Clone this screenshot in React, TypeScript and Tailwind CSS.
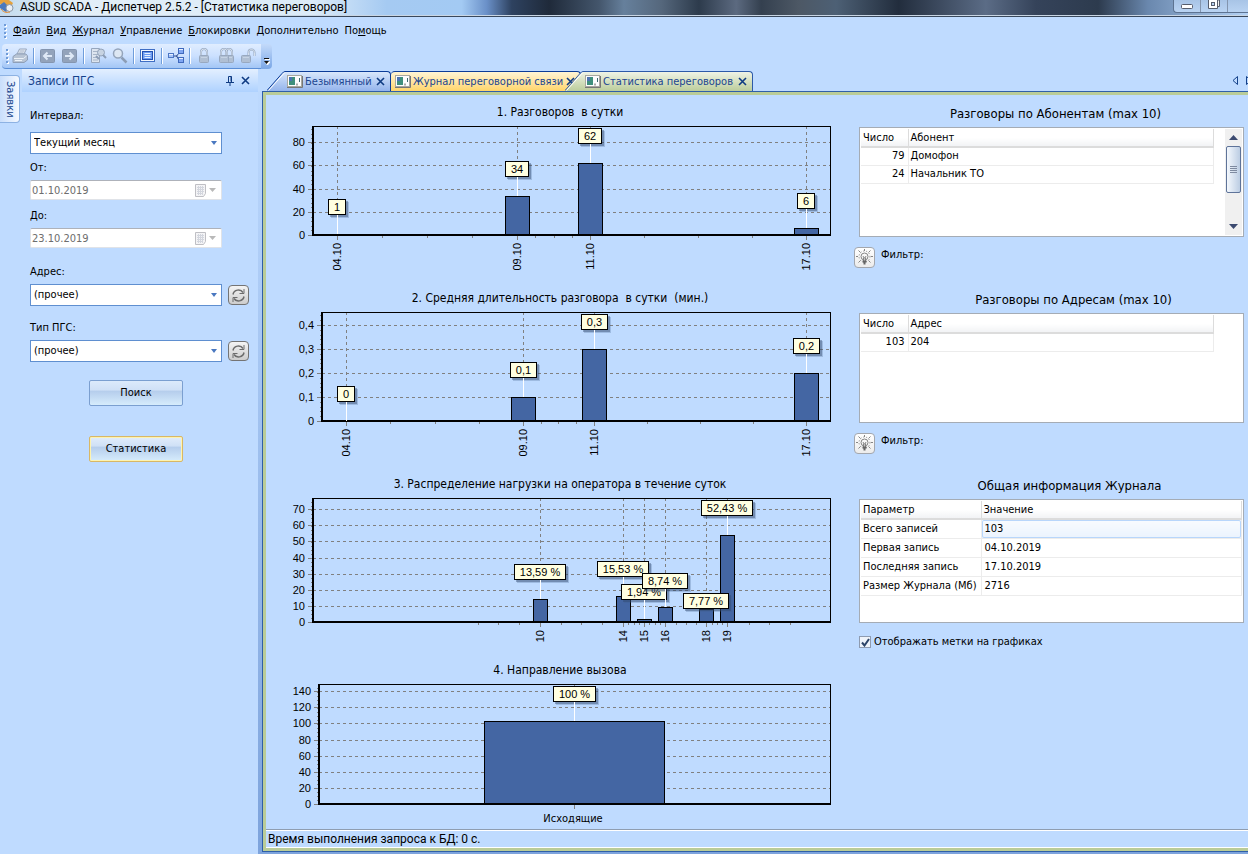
import { useState, type ReactNode } from 'react';
import clsx from 'clsx';

interface Bar {
  x: number;
  width: number;
  top: number;
  tick: string;
}

interface Mark {
  x: number;
  left: number;
  width: number;
  y: number;
  to: number;
  text: string;
}

interface ChartData {
  title: string;
  titleX: number;
  height: number;
  left: number;
  bottom: number;
  yTicks: [number, string][];
  yMinor: number;
  xMinor: number[];
  bars: Bar[];
  marks: Mark[];
  flatLabels?: boolean;
}

// Chart geometry is given in units of the 584 wide view box
const PLOT_TOP = 31;
const PLOT_RIGHT = 564;

const CHARTS: ChartData[] = [
  {
    title: '1. Разговоров \u00a0в сутки',
    titleX: 294,
    height: 186,
    left: 47,
    bottom: 140,
    yTicks: [[140, '0'], [117, '20'], [94, '40'], [70, '60'], [47, '80']],
    yMinor: 5,
    xMinor: [116, 161, 206, 269, 288, 306, 378, 432, 486],
    bars: [
      { x: 71, width: 0, top: 140, tick: '04.10' },
      { x: 251, width: 24, top: 101, tick: '09.10' },
      { x: 324, width: 24, top: 68, tick: '11.10' },
      { x: 540, width: 24, top: 133, tick: '17.10' },
    ],
    marks: [
      { x: 71, left: 62, width: 17, y: 104, to: 139, text: '1' },
      { x: 251, left: 239, width: 23, y: 66, to: 101, text: '34' },
      { x: 324, left: 312, width: 23, y: 33, to: 68, text: '62' },
      { x: 540, left: 531, width: 17, y: 98, to: 133, text: '6' },
    ],
  },
  {
    title: '2. Средняя длительность разговора \u00a0в сутки \u00a0(мин.)',
    titleX: 294,
    height: 186,
    left: 56,
    bottom: 140,
    yTicks: [[140, '0'], [116, '0,1'], [92, '0,2'], [68, '0,3'], [44, '0,4']],
    yMinor: 5,
    xMinor: [124, 169, 213, 275, 292, 310, 381, 434, 487],
    bars: [
      { x: 80, width: 0, top: 140, tick: '04.10' },
      { x: 257, width: 24, top: 116, tick: '09.10' },
      { x: 328, width: 24, top: 68, tick: '11.10' },
      { x: 540, width: 24, top: 92, tick: '17.10' },
    ],
    marks: [
      { x: 80, left: 71, width: 17, y: 105, to: 140, text: '0' },
      { x: 257, left: 244, width: 26, y: 81, to: 116, text: '0,1' },
      { x: 328, left: 315, width: 26, y: 33, to: 68, text: '0,3' },
      { x: 540, left: 527, width: 26, y: 57, to: 92, text: '0,2' },
    ],
  },
  {
    title: '3. Распределение нагрузки на оператора в течение суток',
    titleX: 294,
    height: 186,
    left: 47,
    bottom: 155,
    yTicks: [[155, '0'], [139, '10'], [123, '20'], [107, '30'], [91, '40'], [74, '50'], [58, '60'], [42, '70']],
    yMinor: 4,
    xMinor: [212, 232, 253, 295, 315, 336, 362, 368, 373, 383, 389, 394, 410, 420, 430, 446, 451, 456, 483, 503, 524],
    bars: [
      { x: 274, width: 14, top: 132, tick: '10' },
      { x: 357, width: 14, top: 129, tick: '14' },
      { x: 378, width: 14, top: 152, tick: '15' },
      { x: 399, width: 14, top: 140, tick: '16' },
      { x: 440, width: 14, top: 142, tick: '18' },
      { x: 461, width: 14, top: 68, tick: '19' },
    ],
    marks: [
      { x: 274, left: 248, width: 51, y: 97, to: 132, text: '13,59 %' },
      { x: 357, left: 331, width: 51, y: 94, to: 129, text: '15,53 %' },
      { x: 378, left: 355, width: 45, y: 117, to: 152, text: '1,94 %' },
      { x: 399, left: 376, width: 45, y: 106, to: 140, text: '8,74 %' },
      { x: 440, left: 417, width: 45, y: 126, to: 142, text: '7,77 %' },
      { x: 461, left: 435, width: 51, y: 33, to: 68, text: '52,43 %' },
    ],
  },
  {
    title: '4. Направление вызова',
    titleX: 294,
    height: 176,
    left: 53,
    bottom: 151,
    yTicks: [[151, '0'], [135, '20'], [119, '40'], [103, '60'], [87, '80'], [70, '100'], [54, '120'], [38, '140']],
    yMinor: 4,
    xMinor: [],
    bars: [{ x: 308, width: 180, top: 68, tick: 'Исходящие' }],
    marks: [{ x: 308, left: 287, width: 42, y: 33, to: 68, text: '100 %' }],
    flatLabels: true,
  },
];

function Chart({ data, showMarks }: { data: ChartData; showMarks: boolean }) {
  const { left, bottom, yTicks } = data;
  const step = (yTicks[0][0] - yTicks[1][0]) / data.yMinor;
  const minorY: number[] = [];
  for (let y = bottom - step; y > PLOT_TOP; y -= step) minorY.push(Math.round(y));

  return (
    <svg
      viewBox={`0 0 584 ${data.height}`}
      className="block h-auto w-full font-['Liberation_Sans',sans-serif] text-[11px]"
      shapeRendering="crispEdges"
      role="img"
      aria-label={data.title}
    >
      <text x={data.titleX} y="21" textAnchor="middle" className="font-['DejaVu_Sans_Condensed','DejaVu_Sans',sans-serif] text-[12px]">
        {data.title}
      </text>

      {/* Grid */}
      <g stroke="#808080" strokeDasharray="3 3">
        {yTicks.slice(1).map(([y]) => (
          <line key={y} x1={left} x2={PLOT_RIGHT} y1={y + 0.5} y2={y + 0.5} />
        ))}
        {data.bars.map((bar) => (
          <line key={bar.tick} x1={bar.x + 0.5} x2={bar.x + 0.5} y1={PLOT_TOP} y2={bottom} />
        ))}
      </g>

      {/* Ticks */}
      <g stroke="#808080">
        {yTicks.map(([y]) => (
          <line key={y} x1={left - 5} x2={left} y1={y + 0.5} y2={y + 0.5} />
        ))}
        {minorY.map((y) => (
          <line key={y} x1={left - 2} x2={left} y1={y + 0.5} y2={y + 0.5} />
        ))}
        {data.xMinor.map((x) => (
          <line key={x} x1={x + 0.5} x2={x + 0.5} y1={bottom} y2={bottom + 3} />
        ))}
        {data.bars.map((bar) => (
          <line key={bar.tick} x1={bar.x + 0.5} x2={bar.x + 0.5} y1={bottom} y2={bottom + 5} />
        ))}
      </g>

      {data.bars.map((bar) =>
        bar.width > 0 ? (
          <rect
            key={bar.tick}
            x={bar.x - bar.width / 2 + 0.5}
            y={bar.top + 0.5}
            width={bar.width}
            height={bottom - bar.top}
            fill="#4466a3"
            stroke="#000"
          />
        ) : null
      )}

      {/* Frame */}
      <path d={`M${left} ${PLOT_TOP + 0.5}H${PLOT_RIGHT + 0.5}V${bottom}`} fill="none" stroke="#000" />
      <path d={`M${left} ${PLOT_TOP}V${bottom}H${PLOT_RIGHT + 1}`} fill="none" stroke="#000" strokeWidth="2" />

      {yTicks.map(([y, text]) => (
        <text key={text} x={left - 8} y={y + 4} textAnchor="end">
          {text}
        </text>
      ))}
      {data.bars.map((bar) =>
        data.flatLabels ? (
          <text key={bar.tick} x={bar.x - 1} y={bottom + 18} textAnchor="middle" className="font-['DejaVu_Sans_Condensed','DejaVu_Sans',sans-serif]">
            {bar.tick}
          </text>
        ) : (
          <text key={bar.tick} transform={`translate(${bar.x + 4} ${bottom + 8}) rotate(-90)`} textAnchor="end">
            {bar.tick}
          </text>
        )
      )}

      {showMarks &&
        data.marks.map((mark) => (
          <g key={mark.text}>
            <rect x={mark.left + 3} y={mark.y + 3} width={mark.width + 1} height="16" fill="#3d5a88" opacity="0.25" />
            <rect x={mark.left + 2} y={mark.y + 2} width={mark.width + 1} height="16" fill="#2f456a" opacity="0.4" />
            <line x1={mark.x + 0.5} x2={mark.x + 0.5} y1={mark.y + 15} y2={mark.to} stroke="#fff" />
            <rect x={mark.left + 0.5} y={mark.y + 0.5} width={mark.width} height="15" fill="#ffffe1" stroke="#000" />
            <text x={mark.left + mark.width / 2 + 0.5} y={mark.y + 12} textAnchor="middle">
              {mark.text}
            </text>
          </g>
        ))}
    </svg>
  );
}

const MENU = [
  ['', 'Ф', 'айл'],
  ['', 'В', 'ид'],
  ['', 'Ж', 'урнал'],
  ['', 'У', 'правление'],
  ['', 'Б', 'локировки'],
  ['', 'Д', 'ополнительно'],
  ['По', 'м', 'ощь'],
];

function Grip() {
  return (
    <svg width="3" height="16" aria-hidden="true" className="shrink-0">
      {[1, 5, 9, 13].map((y) => (
        <g key={y}>
          <rect x="1" y={y + 1} width="2" height="2" fill="#fff" />
          <rect x="0" y={y} width="2" height="2" fill="#6f9bd8" />
        </g>
      ))}
    </svg>
  );
}

function ToolButton({ label, disabled, children }: { label: string; disabled?: boolean; children: ReactNode }) {
  return (
    <button type="button" disabled={disabled} aria-label={label} className="flex h-[22px] w-[22px] items-center justify-center">
      <svg width="18" height="18" viewBox="0 0 18 18" aria-hidden="true">
        {children}
      </svg>
    </button>
  );
}

function Separator() {
  return (
    <span className="flex h-4 w-[6px] justify-center">
      <span className="w-px bg-[#6f9ddb]" />
      <span className="w-px bg-white" />
    </span>
  );
}

function Padlock({ x = 0 }: { x?: number }) {
  return (
    <g>
      <path d={`M${x + 6} 9V5a3 3 0 0 1 6 0V9`} fill="none" stroke="#97a8c0" strokeWidth="2" />
      <path d={`M${x + 6} 9V5a3 3 0 0 1 6 0V9`} fill="none" stroke="#d5dfec" strokeWidth="1" />
      <rect x={x + 4.5} y="8.500" width="9" height="7" rx="1" fill="#b0bfd3" stroke="#98a8bf" />
      <path d={`M${x + 6} 10.500h6`} stroke="#c6d3e4" />
    </g>
  );
}

function Toolbar() {
  return (
    <div role="toolbar" aria-label="Стандартная" className="flex w-[270px] items-end">
      <div className="flex h-[25px] flex-1 items-center rounded-l border-b border-[#5b8ed6] bg-linear-to-b from-[#e0edff] via-[#cbe0ff] to-[#a3c6f5] pl-1">
        <Grip />
        <ToolButton label="Печать" disabled>
          <path d="M6 7 8.500 2h7L13 7z" fill="#e8edf4" stroke="#97a6bc" />
          <path d="M8.500 4h5M7.500 6h5" stroke="#a5b2c6" />
          <path d="M2 9.500 5.500 7H15l1.500 2v4L13 15.500H2z" fill="#b8c4d4" stroke="#8f9fb7" />
          <path d="M3 11.500h9.500l3-2.500M4 13.500h7" fill="none" stroke="#edf2f8" />
        </ToolButton>
        <Separator />
        <ToolButton label="Назад" disabled>
          <rect x="1.500" y="2.500" width="14" height="13" rx="1" fill="#93a3bb" stroke="#8495af" />
          <path d="M13 9H5m3.500-3.500L5 9l3.500 3.500" fill="none" stroke="#dfe9f6" strokeWidth="2" />
        </ToolButton>
        <ToolButton label="Вперёд" disabled>
          <rect x="1.500" y="2.500" width="14" height="13" rx="1" fill="#93a3bb" stroke="#8495af" />
          <path d="M4 9h8M8.500 5.500 12 9l-3.500 3.500" fill="none" stroke="#dfe9f6" strokeWidth="2" />
        </ToolButton>
        <Separator />
        <ToolButton label="Найти в журнале" disabled>
          <path d="M2.500 1.500h8v14h-8z" fill="#dde5ef" stroke="#96a6bd" />
          <path d="M4 4.500h5M4 7.500h5M4 10.500h5M4 13h5" stroke="#a7b5c8" />
          <path d="m7 9 3 3" stroke="#8c9db6" strokeWidth="2" />
          <circle cx="12" cy="5.500" r="3.500" fill="#c7d3e2" stroke="#93a3ba" />
          <path d="m14 8 3 3" stroke="#8c9db6" strokeWidth="2" />
        </ToolButton>
        <ToolButton label="Поиск" disabled>
          <circle cx="7" cy="6.500" r="4.500" fill="#dde7f3" stroke="#94a4bb" strokeWidth="1.500" />
          <path d="m10.500 10.500 5 5" stroke="#8c9db6" strokeWidth="2.500" />
        </ToolButton>
        <Separator />
        <ToolButton label="Экран">
          <rect x="1.500" y="2.500" width="14" height="12" fill="#f2f7ff" stroke="#3f6ec4" />
          <rect x="3.500" y="4.500" width="10" height="8" fill="#6d9cf2" stroke="#2450b0" />
          <path d="M5.500 6.500h6M5.500 8.500h6M5.500 10.500h6" stroke="#e6efff" />
        </ToolButton>
        <Separator />
        <ToolButton label="Схема">
          <path d="M6 9h4.500M13 5 9.500 9l3 5" fill="none" stroke="#2c4b8e" />
          <rect x="1.500" y="6.500" width="5" height="4" fill="#a9c6fa" stroke="#4c76c4" />
          <rect x="11.500" y="1.500" width="5" height="5" fill="#7fa6f2" stroke="#3f69bd" />
          <rect x="11.500" y="10.500" width="5" height="5" fill="#7fa6f2" stroke="#3f69bd" />
          <path d="M2 7.500h4M12 2.500h4M12 11.500h4" stroke="#e8f1ff" />
        </ToolButton>
        <Separator />
        <ToolButton label="Заблокировать" disabled>
          <Padlock />
        </ToolButton>
        <ToolButton label="Заблокировать все" disabled>
          <Padlock x={3} />
          <Padlock x={-2} />
        </ToolButton>
        <ToolButton label="Разблокировать" disabled>
          <path d="M9.500 9V5.500a3 3 0 0 1 6 0V9" fill="none" stroke="#97a8c0" strokeWidth="2" />
          <path d="M9.500 9V5.500a3 3 0 0 1 6 0V9" fill="none" stroke="#d5dfec" />
          <rect x="2.500" y="8.500" width="9" height="7" rx="1" fill="#b0bfd3" stroke="#98a8bf" />
          <path d="M4 10.500h6" stroke="#c6d3e4" />
        </ToolButton>
      </div>
      <button type="button" aria-label="Параметры панели" className="flex h-[25px] w-[11px] items-end justify-center rounded-r bg-linear-to-b from-[#c3dafa] to-[#7ba7e6] pb-1">
        <svg width="7" height="8" aria-hidden="true">
          <path d="M2 2.500h5M2 5h5L4.500 8z" fill="#fff" stroke="#fff" />
          <path d="M1 1h5v1H1zM1 4h5L3.500 7z" fill="#111" />
        </svg>
      </button>
    </div>
  );
}

function CloseMark() {
  return (
    <svg width="9" height="9" aria-hidden="true">
      <path d="m1 1 7 7M8 1 1 8" stroke="currentColor" strokeWidth="1.600" />
    </svg>
  );
}

function FormIcon() {
  return (
    <svg width="16" height="13" aria-hidden="true" className="shrink-0">
      <rect x="0.500" y="0.500" width="14" height="11" fill="#fdfdfd" stroke="#a8a8a0" />
      <path d="M0 12.500h15.500V1" fill="none" stroke="#777" />
      <rect x="2" y="2" width="6" height="8" fill="#3f8f7c" />
      <path d="M2 2h3v4H2z" fill="#4d74b0" />
      <path d="M12.500 3v4" stroke="#3c6a70" />
      <path d="M9 9.500h2" stroke="#aaa" strokeWidth="2" />
    </svg>
  );
}

interface TabProps {
  title: string;
  tone: 'blue' | 'yellow' | 'green';
  selected?: boolean;
}

const TAB_BODY = {
  blue: 'w-[106px] border-[#0c3c98] from-[#d9e7fb] to-[#94b4ec]',
  yellow: 'w-[190px] rounded-tl border-[#0c3c98] from-[#fff4d4] to-[#ffd568] pl-[2px]',
  green: 'w-[170px] border-[#2d5aa8] from-[#eff3e6] to-[#bccd9b]',
};

const SLANT = {
  blue: ['#d9e7fb', '#94b4ec', '#0c3c98'],
  yellow: ['#fff4d4', '#ffd568', '#0c3c98'],
  green: ['#eff3e6', '#bccd9b', '#2d5aa8'],
};

function Tab({ title, tone, selected }: TabProps) {
  const [from, to, line] = SLANT[tone];
  return (
    <div className={clsx('flex h-5', selected && 'relative -ml-4')}>
      {tone !== 'yellow' && (
        <svg width="18" height="20" aria-hidden="true">
          <linearGradient id={`slant-${tone}`} x1="0" y1="0" x2="0" y2="1">
            <stop offset="0" stopColor={from} />
            <stop offset="1" stopColor={to} />
          </linearGradient>
          <path d="M0 20 16 2Q17 .5 18 .5V20z" fill={`url(#slant-${tone})`} />
          <path d="M0 19.500 15 2.500Q16.500 .5 18 .5" fill="none" stroke={line} />
          <path d="M1.500 19.500 16 3.500 18 1.500" fill="none" stroke="#fff" />
        </svg>
      )}
      <div className={clsx('flex items-center rounded-tr border-t border-r bg-linear-to-b', TAB_BODY[tone])}>
        <button type="button" role="tab" aria-selected={!!selected} className="flex flex-1 items-center gap-[2px] pl-[2px] whitespace-nowrap text-[#1b4590]">
          <FormIcon />
          {title}
        </button>
        <button type="button" aria-label={`Закрыть: ${title}`} className="mr-[5px] text-[#0f3b82]">
          <CloseMark />
        </button>
      </div>
    </div>
  );
}

interface ComboProps {
  id: string;
  label: string;
  options: string[];
  refresh?: boolean;
  spaced?: boolean;
}

function Combo({ id, label, options, refresh, spaced }: ComboProps) {
  return (
    <div className={clsx('flex flex-col', spaced ? 'gap-2' : 'gap-1')}>
      <label htmlFor={id} className="leading-4">
        {label}
      </label>
      <div className="flex items-center gap-[6px]">
        <div className="relative w-[192px]">
          <select id={id} className="block h-[22px] w-full appearance-none border border-[#5f8fd0] bg-white pl-[3px] outline-none">
            {options.map((option) => (
              <option key={option}>{option}</option>
            ))}
          </select>
          <svg width="6" height="4" aria-hidden="true" className="pointer-events-none absolute top-[9px] right-[5px]">
            <path d="M0 0h6L3 4z" fill="#4a78c0" />
          </svg>
        </div>
        {refresh && (
          <button
            type="button"
            aria-label={`Обновить: ${label}`}
            className="flex h-5 w-[21px] items-center justify-center rounded-sm border border-[#747474] bg-linear-to-b from-[#f4f4f4] to-[#cdcdcd]"
          >
            <svg width="15" height="15" aria-hidden="true" fill="none" stroke="#6c6c6c" strokeWidth="1.500">
              <path d="M2 6.500C3 1.500 9.500.500 12 4.500M13 8.500C12 13.500 5.500 14.500 3 10.500" />
              <path d="M13 1v4.500H8.500M2 14V9.500h4.500" strokeWidth="1" />
            </svg>
          </button>
        )}
      </div>
    </div>
  );
}

function DateField({ id, label, value }: { id: string; label: string; value: string }) {
  return (
    <div className="flex flex-col gap-1">
      <label htmlFor={id} className="leading-4">
        {label}
      </label>
      <div className="relative w-[192px]">
        <input
          id={id}
          type="text"
          disabled
          defaultValue={value}
          className="block h-5 w-full rounded-xs border border-[#e0e3e8] border-t-[#aeb2ba] bg-white pl-px text-[#6d6d6d]"
        />
        <svg width="22" height="13" aria-hidden="true" className="absolute top-1 right-[5px]">
          <path d="M.5.5h10v9l-2 3h-8z" fill="#f4f4f6" stroke="#bfbfc4" />
          <path d="M2 3.500h7M2 5.500h7M2 7.500h7M2 9.500h6M3.500 2v9M5.500 2v9M7.500 2v9" stroke="#d3d6de" />
          <path d="M14 4h7l-3.500 4z" fill="#b9b9b9" />
        </svg>
      </div>
    </div>
  );
}

function SidePanel() {
  return (
    <aside className="flex w-[236px] shrink-0 flex-col">
      <div className="flex h-[23px] items-center bg-linear-to-b from-[#e3efff] to-[#afd2ff] pr-2 pl-[6px] text-[#15428b]">
        <h2 className="flex-1 text-[12px]">Записи ПГС</h2>
        <button type="button" aria-label="Закрепить" className="mr-[7px]">
          <svg width="8" height="10" aria-hidden="true" fill="none" stroke="#0f3b82">
            <path d="M2.500 6V.5h3V6M5 .5v5M0 6.500h8M4 7v3" />
          </svg>
        </button>
        <button type="button" aria-label="Закрыть панель" className="text-[#0f3b82]">
          <CloseMark />
        </button>
      </div>
      <form className="flex flex-col px-2 pt-4" onSubmit={(e) => e.preventDefault()}>
        <Combo id="interval" label="Интервал:" options={['Текущий месяц', 'Прошлый месяц']} spaced />
        <div className="mt-[6px] flex flex-col gap-2">
          <DateField id="from" label="От:" value="01.10.2019" />
          <DateField id="to" label="До:" value="23.10.2019" />
        </div>
        <div className="mt-4 flex flex-col gap-[14px]">
          <Combo id="address" label="Адрес:" options={['(прочее)']} refresh />
          <Combo id="kind" label="Тип ПГС:" options={['(прочее)']} refresh />
        </div>
        <div className="mt-[18px] flex flex-col items-center gap-[30px] pr-2">
          <button
            type="submit"
            className="h-[26px] w-[94px] rounded-xs border border-[#7b9fd0] bg-[linear-gradient(#dceafb,#cfe0f6_38%,#b5cdec_42%,#d6ecfc)]"
          >
            Поиск
          </button>
          <button
            type="button"
            className="h-[26px] w-[94px] rounded-xs border border-[#d8b766] bg-[linear-gradient(#e2edfb,#cfe0f6_38%,#b5cdec_42%,#d6ecfc)] shadow-[inset_0_0_0_1px_#fdf3b0]"
          >
            Статистика
          </button>
        </div>
      </form>
    </aside>
  );
}

function FilterRow() {
  return (
    <div className="mt-[10px] -ml-[5px] flex items-start gap-[6px]">
      <button type="button" aria-label="Фильтр" className="flex h-[21px] w-[21px] items-center justify-center rounded-sm border border-[#a3a7ae] bg-linear-to-b from-white to-[#ececec]">
        <svg width="17" height="17" aria-hidden="true" fill="none" stroke="#858585">
          <circle cx="8.500" cy="7.500" r="3.500" />
          <circle cx="8.500" cy="7.500" r="5.500" strokeDasharray="1 2" />
          <path d="M7 7 8 9h1l1-2M7.500 9v3M9.500 9v3" />
          <path d="M8.500 0v2M0 7.500h2M15 7.500h2M2.500 1.500l2 2M14.500 1.500l-2 2M2.500 13.500l2-2M14.500 13.500l-2-2" />
          <path d="M6.500 12.500h4M7.500 14.500h2" stroke="#666" strokeWidth="2" />
        </svg>
      </button>
      <span className="leading-4">Фильтр:</span>
    </div>
  );
}

const HEAD_CELL = 'h-[18px] border-r border-b-2 border-[#dcdcdc] bg-linear-to-b from-white from-50% to-[#f2f3f5] px-[2px] text-left font-normal';

interface CountGridProps {
  title: string;
  column: string;
  rows: [number, string][];
  scroll?: boolean;
}

function CountGrid({ title, column, rows, scroll }: CountGridProps) {
  return (
    <section className="h-[186px]">
      <h3 className={clsx('pt-[10px] text-center text-[13px] leading-[18px]', scroll ? 'pl-2' : 'pl-11')}>{title}</h3>
      <div className="mt-1 flex h-[110px] justify-between border border-[#a5acb5] bg-white p-px">
        <table className="h-fit w-[353px] border-collapse">
          <thead>
            <tr>
              <th scope="col" className={clsx(HEAD_CELL, 'w-[47px]')}>
                Число
              </th>
              <th scope="col" className={HEAD_CELL}>
                {column}
              </th>
            </tr>
          </thead>
          <tbody>
            {rows.map(([count, name]) => (
              <tr key={name}>
                <td className="h-[18px] border-r border-b border-[#ececec] pr-[3px] text-right">{count}</td>
                <td className="h-[18px] border-r border-b border-[#ececec] pl-[2px]">{name}</td>
              </tr>
            ))}
          </tbody>
        </table>
        {scroll && (
          <div className="flex w-[17px] flex-col items-center justify-between bg-[#f0f0f0] pb-[6px]" aria-hidden="true">
            <div className="flex flex-col items-center gap-[6px] pt-[6px]">
              <svg width="9" height="5">
                <path d="M0 5h9L4.500 0z" fill="#3c4a70" />
              </svg>
              <div className="flex h-[47px] w-[15px] flex-col items-center justify-center gap-px rounded-xs border border-[#5e7399] bg-linear-to-r from-[#f4f8fd] to-[#bccde3]">
                <span className="h-px w-[7px] bg-[#7e8aa0]" />
                <span className="h-px w-[7px] bg-[#7e8aa0]" />
                <span className="h-px w-[7px] bg-[#7e8aa0]" />
                <span className="h-px w-[7px] bg-[#7e8aa0]" />
              </div>
            </div>
            <svg width="9" height="5">
              <path d="M0 0h9L4.500 5z" fill="#3c4a70" />
            </svg>
          </div>
        )}
      </div>
      <FilterRow />
    </section>
  );
}

const INFO = [
  ['Всего записей', '103'],
  ['Первая запись', '04.10.2019'],
  ['Последняя запись', '17.10.2019'],
  ['Размер Журнала (Мб)', '2716'],
];

function InfoGrid() {
  return (
    <section>
      <h3 className="pt-[10px] pl-9 text-center text-[13px] leading-[18px]">Общая информация Журнала</h3>
      <div className="mt-1 h-[124px] border border-[#a5acb5] bg-white p-px">
        <table className="w-full border-collapse">
          <thead>
            <tr>
              <th scope="col" className={clsx(HEAD_CELL, 'w-[120px]')}>
                Параметр
              </th>
              <th scope="col" className={HEAD_CELL}>
                Значение
              </th>
            </tr>
          </thead>
          <tbody>
            {INFO.map(([name, value], i) => (
              <tr key={name}>
                <td className="h-[19px] border-r border-b border-[#ececec] pl-[2px] whitespace-nowrap">{name}</td>
                <td
                  className={clsx(
                    'h-[19px] border-r border-b border-[#ececec] pl-[3px]',
                    i === 0 && 'rounded-xs bg-linear-to-b from-[#f8fbff] to-[#ebf3fd] shadow-[inset_0_0_0_1px_#b8d6fb]'
                  )}
                >
                  {value}
                </td>
              </tr>
            ))}
          </tbody>
        </table>
      </div>
    </section>
  );
}

function TitleBar() {
  return (
    <header className="flex h-[17px] items-start border-b border-[#39485c] bg-[linear-gradient(90deg,#c3dbee,#e3eff8_6%,#dcebf8_25%,#a5caf2_31%,#a3caf3_37%,#6a90c8_39%,#2e4260_41%,#1f2a3a_44%,#44566c_48%,#66809c_50%,#55677c_53%,#2d3b4c_56%,#5c6a80_59%,#34404f_61%,#4d5865_64%,#4d6075_67%,#222d3d_72%,#5b6c86_79%,#35435a_83%,#2d3b4e_88%,#6a88ae_92%,#b4d2f5)] shadow-[inset_0_-1px_0_#c9d6e4]">
      <svg width="16" height="13" aria-hidden="true" className="shrink-0">
        <path d="M0 0h9l4 3-2 4-5 1-6-4z" fill="#e4a23e" />
        <path d="M0 5 4 2l6 6-4 4-6-4z" fill="#4a79bd" />
        <circle cx="9.500" cy="8" r="3.500" fill="#e9eef4" stroke="#8c98a8" />
        <path d="M1 9c2 3 5 4 9 3" fill="none" stroke="#e88a2a" />
      </svg>
      <h1 className="flex-1 pl-1 font-['Roboto',sans-serif] text-[12px] leading-[14px] whitespace-nowrap">
        ASUD SCADA - Диспетчер 2.5.2 - [Статистика переговоров]
      </h1>
      <div className="flex h-[13px] w-[75px] divide-x divide-[#8395ae] rounded-bl border-b border-l border-[#5d7391] bg-linear-to-b from-[#a8c4e6] to-[#b9d3f2]">
        <button type="button" aria-label="Свернуть" className="flex w-[27px] items-center justify-center">
          <svg width="12" height="5" aria-hidden="true">
            <rect x="0.500" y="0.500" width="11" height="4" rx="1" fill="#fff" stroke="#565d6c" />
          </svg>
        </button>
        <button type="button" aria-label="Восстановить" className="flex w-[27px] items-start justify-center">
          <svg width="12" height="9" aria-hidden="true">
            <path d="M2.500 0H11.500V6.500H2.500z" fill="#eee" stroke="#565d6c" />
            <path d="M.5-1h9v9.500H.5z" fill="#fff" stroke="#565d6c" />
            <rect x="3.500" y="2.500" width="3" height="3" fill="#b9d3f2" stroke="#565d6c" />
          </svg>
        </button>
        <button type="button" aria-label="Закрыть" className="flex-1" />
      </div>
    </header>
  );
}

export default function App() {
  const [showMarks, setShowMarks] = useState(true);

  return (
    <div className="flex min-h-screen flex-col bg-[#bfdbff] font-['DejaVu_Sans_Condensed','DejaVu_Sans',sans-serif] text-[11px] leading-[14px] text-black">
      <TitleBar />

      <nav aria-label="Меню" className="flex h-[26px] items-center gap-[6px] pt-px pl-1">
        <Grip />
        {MENU.map(([before, key, after]) => (
          <button key={after} type="button">
            {before}
            <span className="underline">{key}</span>
            {after}
          </button>
        ))}
      </nav>

      <div className="flex h-[26px] items-end pl-[2px]">
        <Toolbar />
      </div>

      <div className="flex flex-1">
        <div className="w-[22px] shrink-0 pt-[6px]">
          <button
            type="button"
            className="flex h-[48px] w-[20px] items-center justify-center rounded-r border border-l-0 border-[#8db2e3] bg-linear-to-r from-[#c9defb] to-[#f5f9ff] text-[#15428b]"
          >
            <span className="[writing-mode:vertical-rl]">Заявки</span>
          </button>
        </div>

        <SidePanel />

        <div className="flex min-w-0 flex-1 flex-col bg-linear-to-b from-[#bfdbff] to-[#7da3dc] pl-1">
          <div className="-ml-1 flex h-[22px] items-end justify-between bg-[#bfdbff] pl-[9px]">
            <div role="tablist" className="flex">
              <Tab title="Безымянный" tone="blue" />
              <Tab title="Журнал переговорной связи" tone="yellow" />
              <Tab title="Статистика переговоров" tone="green" selected />
            </div>
            <div className="flex gap-2 self-center text-[#15428b]">
              <button type="button" aria-label="Предыдущая вкладка">
                <svg width="6" height="9" aria-hidden="true">
                  <path d="M5.500 .5v8l-4.500-4z" fill="none" stroke="currentColor" />
                </svg>
              </button>
              <button type="button" aria-label="Следующая вкладка" className="w-[2px] overflow-hidden">
                <svg width="6" height="9" aria-hidden="true">
                  <path d="M.5 .5v8l4.500-4z" fill="none" stroke="currentColor" />
                </svg>
              </button>
            </div>
          </div>

          <main className="mb-[2px] flex flex-1 flex-col border border-r-0 border-[#2f5fa8]">
            <div className="flex flex-1 flex-col border-3 border-r-0 border-[#bacc98] bg-[#bfdbff]">
              <div className="flex">
                <div className="min-w-0 flex-1">
                  {CHARTS.map((chart) => (
                    <Chart key={chart.title} data={chart} showMarks={showMarks} />
                  ))}
                </div>
                <div className="w-[398px] shrink-0 pr-1 pl-[9px]">
                  <CountGrid
                    title="Разговоры по Абонентам (max 10)"
                    column="Абонент"
                    rows={[
                      [79, 'Домофон'],
                      [24, 'Начальник ТО'],
                    ]}
                    scroll
                  />
                  <CountGrid title="Разговоры по Адресам (max 10)" column="Адрес" rows={[[103, '204']]} />
                  <InfoGrid />
                  <label className="mt-3 flex w-fit items-center gap-[3px]">
                    <input
                      type="checkbox"
                      checked={showMarks}
                      onChange={(e) => setShowMarks(e.target.checked)}
                      className="peer sr-only"
                    />
                    <span className="flex h-3 w-3 items-center justify-center border border-[#8e9bb0] bg-[#eef3fa] text-transparent peer-checked:text-[#2c4468]">
                      <svg width="9" height="9" aria-hidden="true">
                        <path d="M1 4.500 3.500 7.500 8 1" fill="none" stroke="currentColor" strokeWidth="2" />
                      </svg>
                    </span>
                    Отображать метки на графиках
                  </label>
                </div>
              </div>
              <footer className="mt-auto h-[19px] border-t border-b border-t-[#8f9db0] border-b-white pl-[2px] font-['Roboto',sans-serif] text-[12px] leading-[19px] shadow-[inset_0_1px_0_#fff]">
                Время выполнения запроса к БД: 0 с.
              </footer>
            </div>
          </main>
        </div>
      </div>
    </div>
  );
}
